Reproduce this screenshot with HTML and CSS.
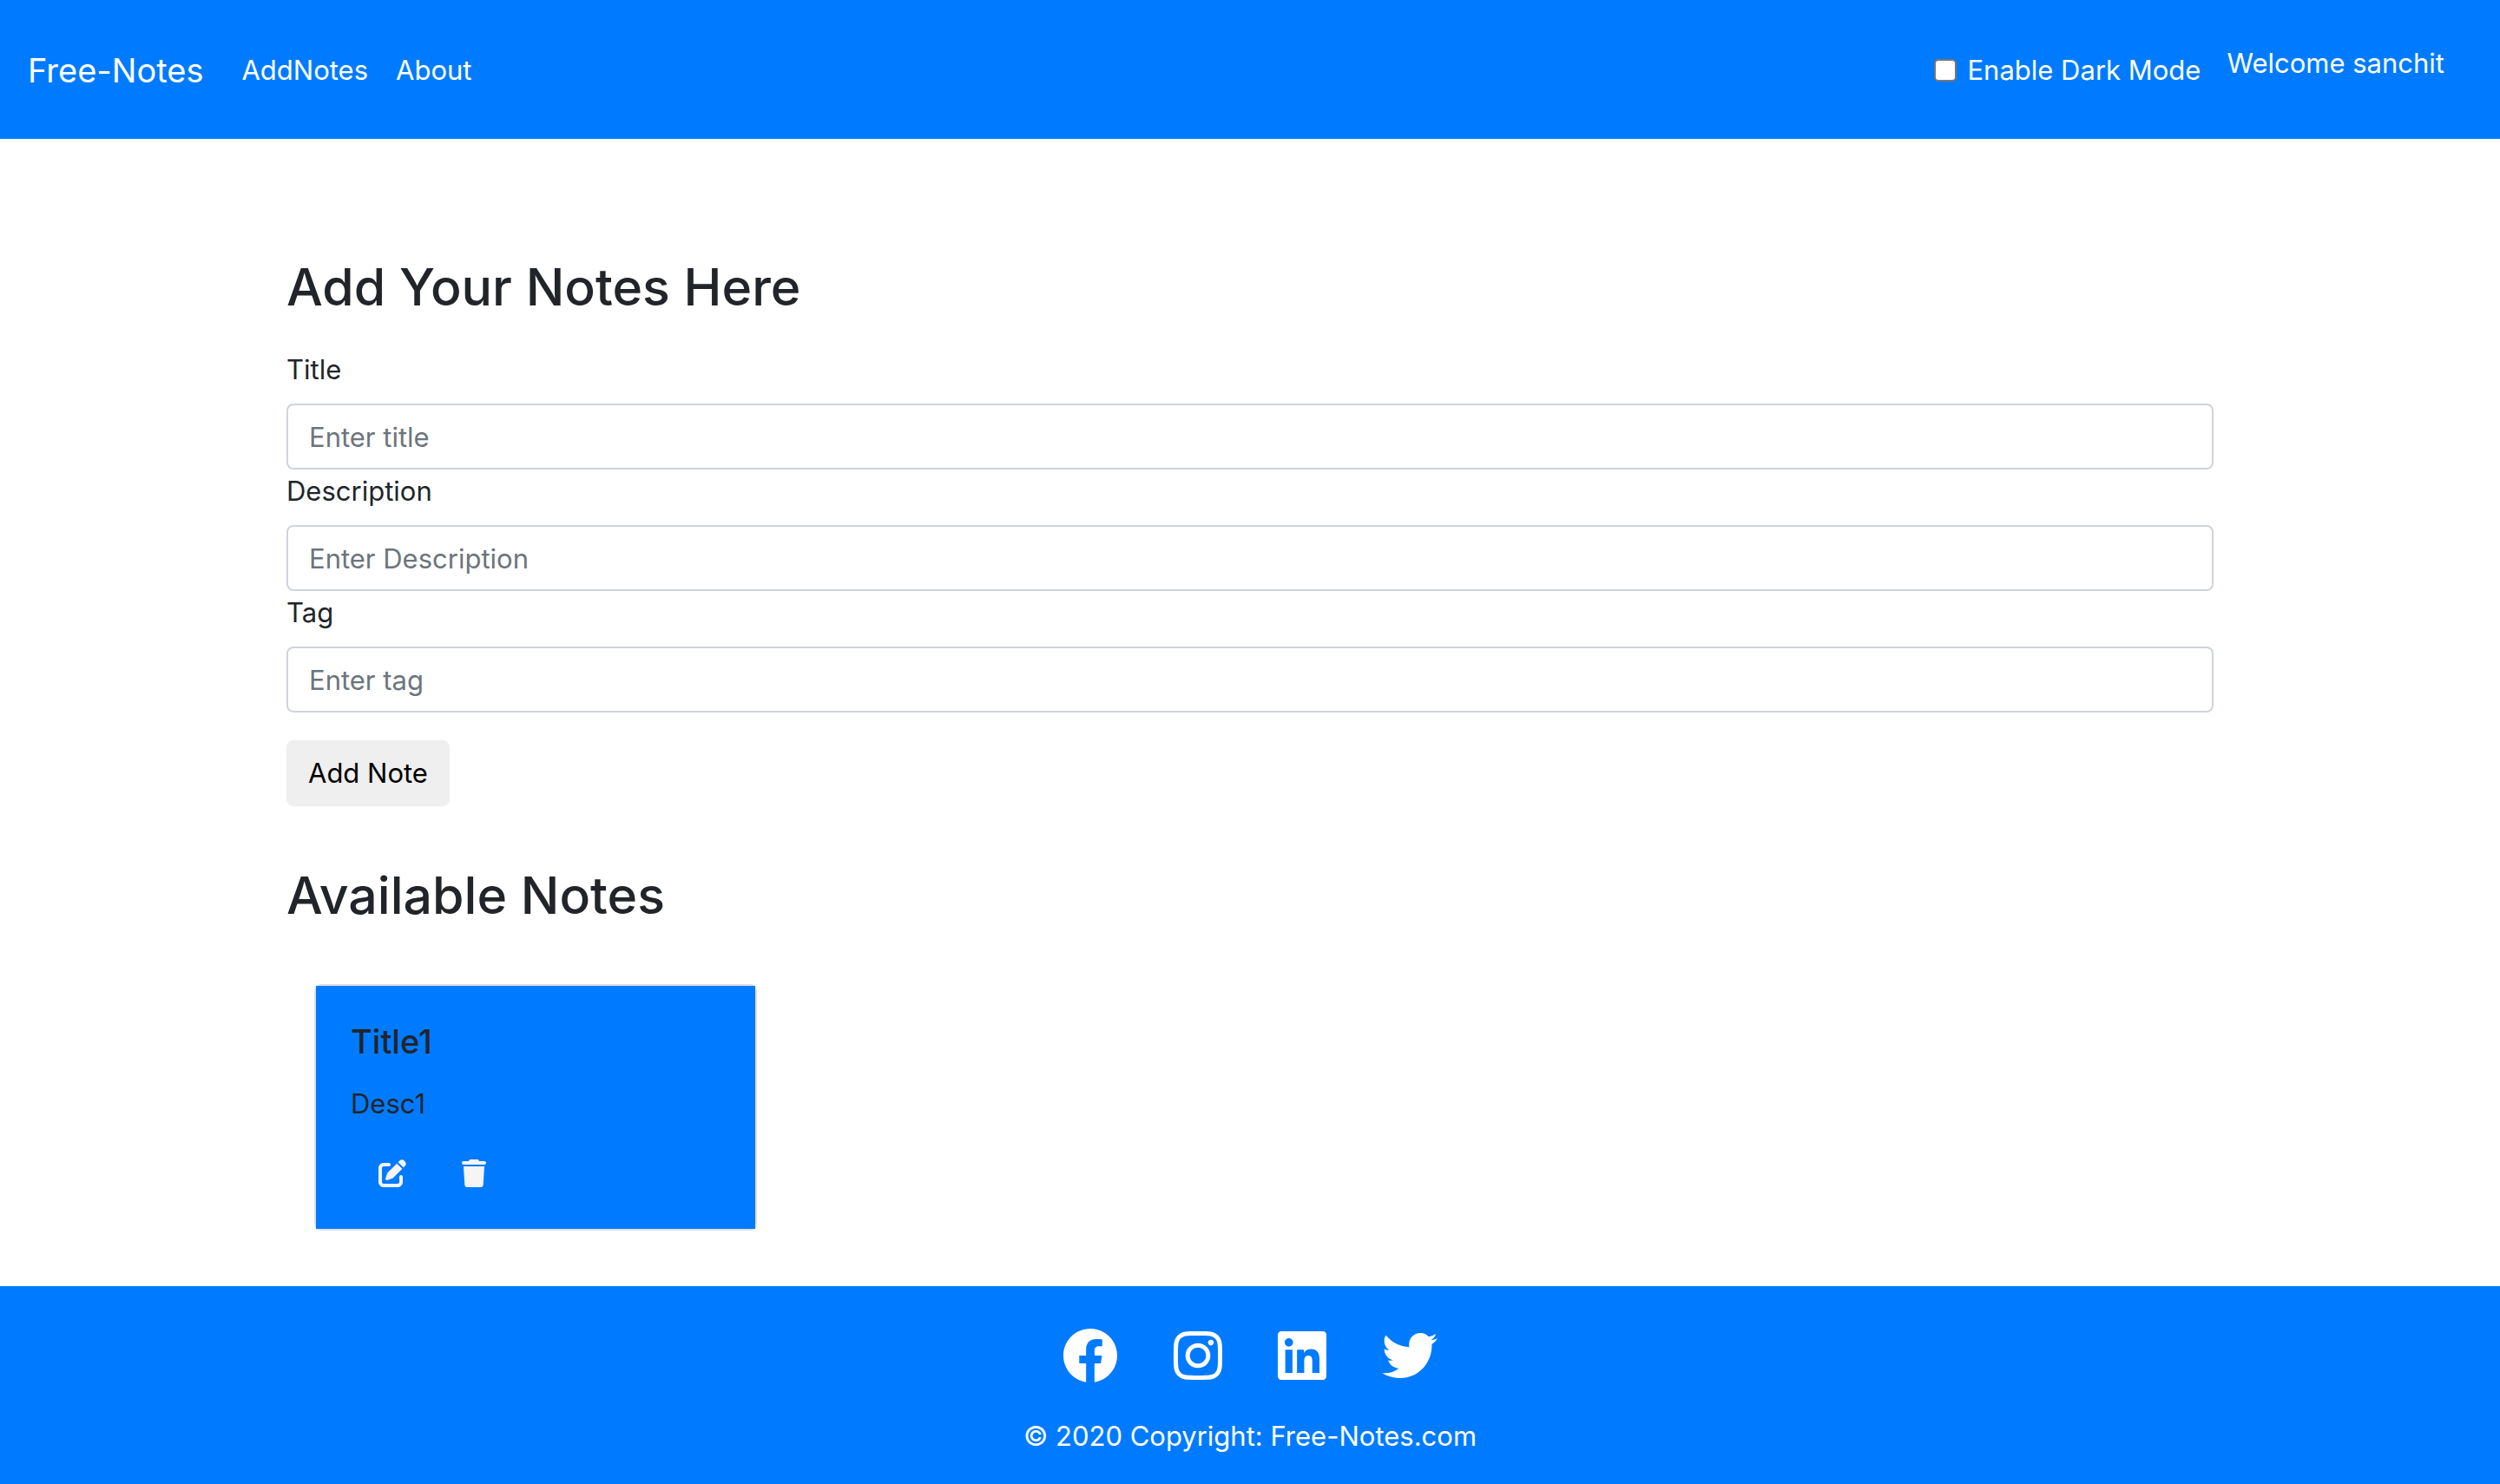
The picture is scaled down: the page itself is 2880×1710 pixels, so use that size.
FILE: index.html
```html
<!DOCTYPE html>
<html lang="en">
<head>
  <meta charset="utf-8">
  <meta name="viewport" content="width=device-width, initial-scale=1">
  <title>Free-Notes</title>
  <link rel="stylesheet" href="styles.css">
</head>
<body>
  <nav class="navbar">
    <a class="brand" href="#">Free-Notes</a>
    <ul class="nav-links">
      <li><a href="#add">AddNotes</a></li>
      <li><a href="#about">About</a></li>
    </ul>
    <div class="dark-toggle">
      <input type="checkbox" id="dark-mode">
      <label for="dark-mode">Enable Dark Mode</label>
    </div>
    <p class="welcome">Welcome sanchit</p>
  </nav>

  <main class="container">
    <h2 id="add">Add Your Notes Here</h2>
    <form class="note-form">
      <label for="title">Title</label>
      <input type="text" id="title" placeholder="Enter title">
      <label for="description">Description</label>
      <input type="text" id="description" placeholder="Enter Description">
      <label for="tag">Tag</label>
      <input type="text" id="tag" placeholder="Enter tag">
      <button type="button" class="btn">Add Note</button>
    </form>

    <h2>Available Notes</h2>
    <div class="notes">
      <article class="card">
        <div class="card-body">
          <h5>Title1</h5>
          <p>Desc1</p>
          <div class="card-actions">
            <button type="button" aria-label="Edit note">
              <svg viewBox="0 0 512 512" width="32" height="32"><path d="M490.3 40.4C512.2 62.27 512.2 97.73 490.3 119.6L460.3 149.7L362.3 51.72L392.4 21.66C414.3-.2135 449.7-.2135 471.6 21.66L490.3 40.4zM172.4 241.7L339.7 74.34L437.7 172.3L270.3 339.6C264.2 345.8 256.7 350.4 248.4 353.2L159.6 382.8C150.1 385.6 141.5 383.4 135 376.1C128.6 370.5 126.4 361 129.2 352.4L158.8 263.6C161.6 255.3 166.2 247.8 172.4 241.7V241.7zM192 63.1C209.7 63.1 224 78.33 224 95.1C224 113.7 209.7 127.1 192 127.1H96C78.33 127.1 64 142.3 64 159.1V416C64 433.7 78.33 448 96 448H352C369.7 448 384 433.7 384 416V319.1C384 302.3 398.3 287.1 416 287.1C433.7 287.1 448 302.3 448 319.1V416C448 469 405 512 352 512H96C42.98 512 0 469 0 416V159.1C0 106.1 42.98 63.1 96 63.1H192z"/></svg>
            </button>
            <button type="button" aria-label="Delete note">
              <svg viewBox="0 0 448 512" width="28" height="32"><path d="M135.2 17.69C140.6 6.848 151.7 0 163.8 0H284.2C296.3 0 307.4 6.848 312.8 17.69L320 32H416C433.7 32 448 46.33 448 64C448 81.67 433.7 96 416 96H32C14.33 96 0 81.67 0 64C0 46.33 14.33 32 32 32H128L135.2 17.69zM394.8 466.1C393.2 492.3 372.3 512 346.9 512H101.1C75.75 512 54.77 492.3 53.19 466.1L31.1 128H416L394.8 466.1z"/></svg>
            </button>
          </div>
        </div>
      </article>
    </div>
  </main>

  <footer class="footer" id="about">
    <div class="social">
      <a href="#" aria-label="Facebook">
        <svg viewBox="0 0 512 512" width="64" height="64"><path d="M504 256C504 119 393 8 256 8S8 119 8 256c0 123.78 90.69 226.38 209.25 245V327.69h-63V256h63v-54.64c0-62.15 37-96.48 93.67-96.48 27.14 0 55.52 4.84 55.52 4.84v61h-31.28c-30.8 0-40.41 19.12-40.41 38.73V256h68.78l-11 71.69h-57.78V501C413.31 482.38 504 379.78 504 256z"/></svg>
      </a>
      <a href="#" aria-label="Instagram">
        <svg viewBox="0 0 448 512" width="56" height="64"><path d="M224.1 141c-63.6 0-114.9 51.3-114.9 114.9s51.3 114.9 114.9 114.9S339 319.5 339 255.9 287.7 141 224.1 141zm0 189.6c-41.1 0-74.7-33.5-74.7-74.7s33.5-74.7 74.7-74.7 74.7 33.5 74.7 74.7-33.6 74.7-74.7 74.7zm146.4-194.3c0 14.9-12 26.8-26.8 26.8-14.9 0-26.8-12-26.8-26.8s12-26.8 26.8-26.8 26.8 12 26.8 26.8zm76.1 27.2c-1.7-35.9-9.9-67.7-36.2-93.9-26.2-26.2-58-34.4-93.9-36.2-37-2.1-147.9-2.1-184.9 0-35.8 1.7-67.6 9.9-93.9 36.1s-34.4 58-36.2 93.9c-2.1 37-2.1 147.9 0 184.9 1.7 35.9 9.9 67.7 36.2 93.9s58 34.4 93.9 36.2c37 2.1 147.9 2.1 184.9 0 35.9-1.7 67.7-9.9 93.9-36.2 26.2-26.2 34.4-58 36.2-93.9 2.1-37 2.1-147.8 0-184.8zM398.8 388c-7.8 19.6-22.9 34.7-42.6 42.6-29.5 11.7-99.5 9-132.1 9s-102.7 2.6-132.1-9c-19.6-7.8-34.7-22.9-42.6-42.6-11.7-29.5-9-99.5-9-132.1s-2.6-102.7 9-132.1c7.8-19.6 22.9-34.7 42.6-42.6 29.5-11.7 99.5-9 132.1-9s102.7-2.6 132.1 9c19.6 7.8 34.7 22.9 42.6 42.6 11.7 29.5 9 99.5 9 132.1s2.7 102.7-9 132.1z"/></svg>
      </a>
      <a href="#" aria-label="LinkedIn">
        <svg viewBox="0 0 448 512" width="56" height="64"><path d="M416 32H31.9C14.3 32 0 46.5 0 64.3v383.4C0 465.5 14.3 480 31.9 480H416c17.6 0 32-14.5 32-32.3V64.3c0-17.8-14.4-32.3-32-32.3zM135.4 416H69V202.2h66.5V416zm-33.2-243c-21.3 0-38.5-17.3-38.5-38.5S80.9 96 102.2 96c21.2 0 38.5 17.3 38.5 38.5 0 21.3-17.2 38.5-38.5 38.5zm282.1 243h-66.4V312c0-24.8-.5-56.7-34.5-56.7-34.6 0-39.9 27-39.9 54.9V416h-66.4V202.2h63.7v29.2h.9c8.9-16.8 30.6-34.5 62.9-34.5 67.2 0 79.7 44.3 79.7 101.9V416z"/></svg>
      </a>
      <a href="#" aria-label="Twitter">
        <svg viewBox="0 0 512 512" width="64" height="64"><path d="M459.37 151.716c.325 4.548.325 9.097.325 13.645 0 138.72-105.583 298.558-298.558 298.558-59.452 0-114.68-17.219-161.137-47.106 8.447.974 16.568 1.299 25.34 1.299 49.055 0 94.213-16.568 130.274-44.832-46.132-.975-84.792-31.188-98.112-72.772 6.498.974 12.995 1.624 19.818 1.624 9.421 0 18.843-1.3 27.614-3.573-48.081-9.747-84.143-51.98-84.143-102.985v-1.299c13.969 7.797 30.214 12.67 47.431 13.319-28.264-18.843-46.781-51.005-46.781-87.391 0-19.492 5.197-37.36 14.294-52.954 51.655 63.675 129.3 105.258 216.365 109.807-1.624-7.797-2.599-15.918-2.599-24.04 0-57.828 46.782-104.934 104.934-104.934 30.213 0 57.502 12.67 76.67 33.137 23.715-4.548 46.456-13.32 66.599-25.34-7.798 24.366-24.366 44.833-46.132 57.827 21.117-2.273 41.584-8.122 60.426-16.243-14.292 20.791-32.161 39.308-52.628 54.253z"/></svg>
      </a>
    </div>
    <p>© 2020 Copyright: Free-Notes.com</p>
  </footer>
</body>
</html>
```

FILE: styles.css
```css
* {
  box-sizing: border-box;
}

body {
  margin: 0;
  background: #fff;
  color: #212529;
  font-family: Inter, "Liberation Sans", sans-serif;
  font-size: 31px;
  line-height: 48px;
}

h2,
h5,
p,
ul {
  margin: 0;
}

a {
  color: inherit;
  text-decoration: none;
}

svg {
  display: block;
  fill: currentColor;
}

input,
button {
  font: inherit;
}

.navbar {
  display: flex;
  align-items: center;
  min-height: 160px;
  padding: 18px 64px 16px 32px;
  background: #007bff;
  color: #fff;
}

.brand {
  margin-right: 44px;
  font-size: 38px;
}

.nav-links {
  display: flex;
  gap: 32px;
  margin-right: auto;
  padding: 0;
  list-style: none;
}

.dark-toggle {
  display: flex;
  align-items: center;
  gap: 12px;
  margin-right: 30px;
}

.dark-toggle input {
  appearance: none;
  width: 26px;
  height: 26px;
  margin: 0;
  border: 2px solid #767676;
  border-radius: 5px;
  background: #fff;
}

.welcome {
  margin-bottom: 16px;
}

.container {
  max-width: 2280px;
  margin: 0 auto;
  padding: 132px 30px 64px;
}

h2 {
  font-size: 59px;
  font-weight: 500;
  line-height: 78px;
}

.note-form {
  display: flex;
  flex-direction: column;
  align-items: flex-start;
  margin: 32px 0 64px;
}

.note-form label {
  margin-bottom: 15px;
}

.note-form input {
  width: 100%;
  height: 76px;
  margin-bottom: 1px;
  padding: 12px 24px;
  border: 2px solid #ced4da;
  border-radius: 8px;
  background: #fff;
  color: #495057;
}

.note-form input::placeholder {
  color: #6c757d;
  opacity: 1;
}

.btn {
  height: 76px;
  margin-top: 31px;
  padding: 12px 25px;
  border: 0;
  border-radius: 8px;
  background: #efefef;
  color: #000;
}

.notes {
  display: flex;
  flex-wrap: wrap;
  gap: 64px;
  margin-top: 63px;
  padding: 0 32px;
}

.card {
  width: 510px;
  border: 2px solid #dfdfdf;
  border-radius: 8px;
}

.card-body {
  padding: 40px;
  background: #007bff;
}

.card h5 {
  margin-bottom: 24px;
  font-size: 38px;
  font-weight: 500;
}

.card-actions {
  display: flex;
  gap: 64px;
  margin-top: 32px;
  padding: 8px 32px;
}

.card-actions button {
  padding: 0;
  border: 0;
  background: none;
  color: #f5f5f5;
}

.footer {
  display: flex;
  flex-direction: column;
  align-items: center;
  gap: 37px;
  padding: 48px 32px 31px;
  background: #007bff;
  color: #fff;
}

.social {
  display: flex;
  gap: 64px;
}
```
